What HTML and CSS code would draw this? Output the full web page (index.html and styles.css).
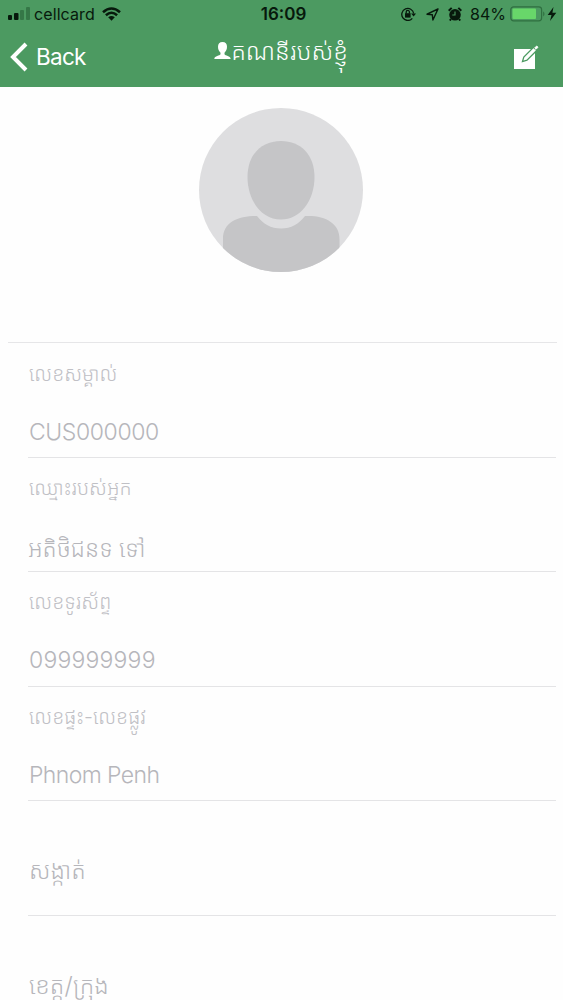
FILE: index.html
```html
<!DOCTYPE html>
<html lang="km">
<head>
  <meta charset="UTF-8" />
  <meta name="viewport" content="width=device-width, initial-scale=1" />
  <title>គណនីរបស់ខ្ញុំ</title>
  <link rel="stylesheet" href="styles.css">
</head>
<body>
  <header>
    <div class="status">
      <div class="status-left">
        <svg class="signal" width="23" height="14" viewBox="0 0 23 14">
          <rect x="0" y="8" width="4" height="5" rx="1" />
          <rect x="6" y="6" width="4.500" height="7" rx="1" />
          <rect class="weak" x="12" y="3" width="4" height="10" rx="1" />
          <rect class="weak" x="18" y="0" width="4" height="13" rx="1" />
        </svg>
        <span class="carrier">cellcard</span>
        <svg class="wifi" width="19" height="14" viewBox="0 0 19 14">
          <path d="M1 5.200Q9.500 -2.200 18 5.200M3.900 8.200Q9.500 3.300 15.100 8.200" fill="none" stroke="#07190c" stroke-width="2.600" />
          <path d="M6.200 10.300Q9.500 7.500 12.800 10.300L9.500 13.800Z" />
        </svg>
      </div>
      <span class="clock">16:09</span>
      <div class="status-right">
        <svg width="15" height="14" viewBox="0 0 15 14" fill="none" stroke="#07190c" stroke-width="1.300">
          <path d="M11.300 11.400A6 6 0 1 1 12.700 6.500" />
          <path d="M10.100 6.500H15L12.600 9.500Z" fill="#07190c" stroke="none" />
          <rect x="4" y="6.200" width="5.600" height="4.400" fill="#07190c" stroke="none" />
          <path d="M5.200 6.500V5a1.600 1.600 0 0 1 3.200 0V6.500" />
        </svg>
        <svg class="arrow" width="13" height="13" viewBox="0 0 13 13" fill="none" stroke="#07190c" stroke-width="1.400" stroke-linejoin="round">
          <path d="M12 1L1 6.200L6.300 6.700L6.900 12Z" />
        </svg>
        <svg class="alarm" width="14" height="14" viewBox="0 0 14 14">
          <circle cx="7" cy="7.800" r="5.800" />
          <path d="M.7 3.800L3.700 .9M10.300 .9L13.300 3.800M3 12L1.800 13.500M11 12L12.200 13.500" stroke="#07190c" stroke-width="2" />
          <path d="M7 4.500V8H4.300" fill="none" stroke="#4c9a61" stroke-width="1.100" />
        </svg>
        <span class="percent">84%</span>
        <svg width="36" height="16" viewBox="0 0 36 16">
          <rect x=".8" y=".8" width="30.800" height="14" rx="2.800" fill="none" stroke="#2f6f40" stroke-width="1.200" />
          <rect x="2.500" y="2.500" width="23.500" height="10.600" rx="1" fill="#68d76a" />
          <path d="M33.200 5.200q2.600 2.700 0 5.400Z" fill="#2f6f40" />
        </svg>
        <svg class="bolt" width="10" height="14" viewBox="0 0 10 14">
          <path d="M6.500 0L.7 8H4.500L3 14L9.300 5.700H5.400Z" />
        </svg>
      </div>
    </div>
    <div class="navbar">
      <a class="back" href="#">
        <svg width="18" height="30" viewBox="0 0 18 30">
          <path d="M16 2L3 15L16 28" fill="none" stroke="#fff" stroke-width="4" />
        </svg>
        <span>Back</span>
      </a>
      <h1>
        <svg width="17" height="18" viewBox="0 0 17 18">
          <path d="M8.500 0C5.500 0 4 2 4 4.800C4 7.500 5.100 9.500 6.500 10.700V12.300C5.800 14 .6 13.700 .3 17H16.700C16.400 13.700 11.200 14 10.500 12.300V10.700C11.900 9.500 13 7.500 13 4.800C13 2 11.500 0 8.500 0Z" fill="#fff" />
        </svg>
        <span>គណនីរបស់ខ្ញុំ</span>
      </h1>
      <a class="edit" href="#">
        <svg width="26" height="25" viewBox="0 0 26 25">
          <path d="M0 4H21V24H0Z" fill="#fff" />
          <path d="M8.500 16.500L9.800 12L19.500 2.300L22.700 5.500L13 15.200Z" fill="#fff" stroke="#4c9a61" stroke-width="1.300" />
          <path d="M20.700 3L22.700 1L24 2.300L22 4.300Z" fill="#fff" stroke="#fff" stroke-width="1" />
        </svg>
      </a>
    </div>
  </header>

  <div class="photo">
    <svg width="164" height="164" viewBox="0 0 164 164">
      <defs>
        <clipPath id="round"><circle cx="82" cy="82" r="82" /></clipPath>
      </defs>
      <g clip-path="url(#round)">
        <rect width="164" height="164" fill="#dedee0" />
        <path d="M82 33C102 33 115.500 47 115.500 69C115.500 93 101 111.500 82 111.500C63 111.500 48.500 93 48.500 69C48.500 47 62 33 82 33Z" fill="#c5c5c7" />
        <path d="M24 164V131C24 114 39 108 58 108C64 116 72 120.500 82 120.500C92 120.500 100 116 106 108C126 107 140.500 115 140.500 131V164Z" fill="#c5c5c7" />
      </g>
    </svg>
  </div>

  <main>
    <div class="field">
      <div class="label">លេខសម្គាល់</div>
      <div class="value">CUS000000</div>
    </div>
    <div class="field">
      <div class="label">ឈ្មោះរបស់អ្នក</div>
      <div class="value khmer">អតិថិជនទ ទៅ</div>
    </div>
    <div class="field">
      <div class="label">លេខទូរស័ព្ទ</div>
      <div class="value phone">099999999</div>
    </div>
    <div class="field">
      <div class="label">លេខផ្ទះ-លេខផ្លូវ</div>
      <div class="value city">Phnom Penh</div>
    </div>
    <div class="field empty">
      <div class="value">សង្កាត់</div>
    </div>
    <div class="field empty">
      <div class="value">ខេត្ត/ក្រុង</div>
    </div>
  </main>
</body>
</html>
```
FILE: styles.css
```css
* {
  box-sizing: border-box;
}

body {
  margin: 0;
  height: 1000px;
  overflow: hidden;
  background: #fefefe;
  font-family: Inter, "Noto Sans Khmer", "Noto Sans", sans-serif;
}

svg {
  display: block;
  flex: none;
}

header {
  height: 87px;
  background: #4c9a61;
  color: #fff;
}

.status {
  display: grid;
  grid-template-columns: 1fr auto 1fr;
  align-items: center;
  height: 28px;
  padding: 0 6px 0 8px;
  color: #07190c;
  fill: #07190c;
  font-size: 16px;
}

.status-left,
.status-right {
  display: flex;
  align-items: center;
}

.status-right {
  justify-content: flex-end;
}

.weak {
  fill: #357747;
}

.carrier {
  margin-left: 3px;
  letter-spacing: 0.1px;
}

.wifi {
  margin-left: 7px;
}

.clock {
  margin-left: 2px;
  font-weight: 600;
  font-size: 17px;
}

.arrow {
  margin-left: 10px;
}

.alarm {
  margin: 0 8px 0 9px;
}

.percent {
  margin-right: 4px;
}

.status-right svg:nth-last-child(2) {
  margin-right: 1px;
}

.navbar {
  display: grid;
  grid-template-columns: 1fr auto 1fr;
  height: 59px;
  padding: 0 23px 0 10px;
}

.back {
  display: flex;
  align-items: center;
  height: 57px;
  gap: 8px;
  color: #fff;
  font-size: 22.500px;
  letter-spacing: -0.7px;
  text-decoration: none;
}

h1 {
  display: flex;
  align-items: center;
  height: 45px;
  margin: 0 0 0 12px;
  font-size: 24px;
  font-weight: 350;
  white-space: nowrap;
}

.edit {
  display: flex;
  align-items: center;
  justify-self: end;
  height: 58px;
}

.photo {
  display: flex;
  justify-content: center;
  height: 256px;
  margin: 0 6px 0 8px;
  padding: 21px 4px 0 0;
  border-bottom: 1px solid #e6e6e8;
}

main {
  padding-top: 0.600px;
}

.field {
  height: 114.400px;
  margin: 0 7px 0 28px;
  padding: 15px 1px 0;
  border-bottom: 1px solid #e4e4e6;
  white-space: nowrap;
}

.label {
  height: 30px;
  line-height: 30px;
  color: #c0c0c5;
  font-size: 19.700px;
  font-weight: 350;
}

.value {
  height: 30px;
  margin-top: 28px;
  line-height: 30px;
  color: #b6b6bb;
  font-size: 23px;
  font-weight: 350;
  letter-spacing: -0.4px;
}

.khmer {
  margin: 31px 0 0 -1px;
  letter-spacing: 0;
}

.phone {
  letter-spacing: 0.200px;
}

.city {
  letter-spacing: -0.600px;
}

.empty {
  padding-top: 55px;
}

.empty .value {
  margin-top: 0;
  font-size: 23.700px;
  letter-spacing: 0;
}
```
